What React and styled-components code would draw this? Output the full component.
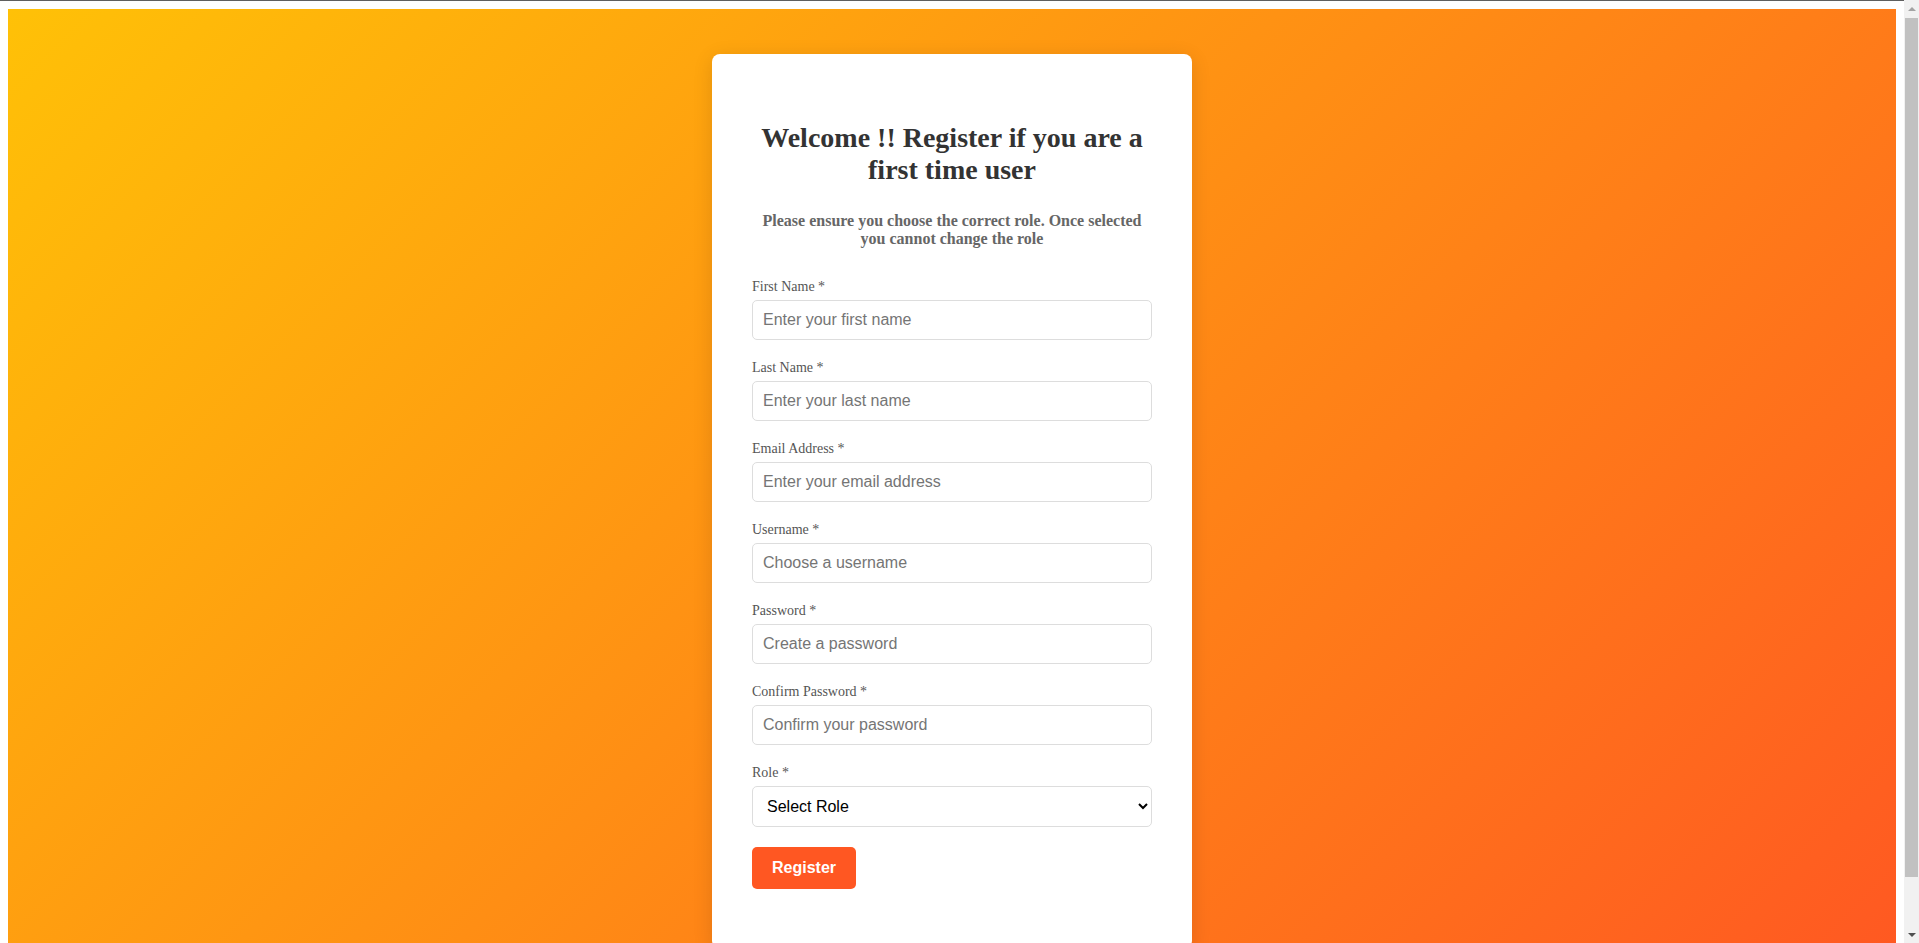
import React from "react";
import styled, { createGlobalStyle } from "styled-components";

const GlobalStyle = createGlobalStyle`
  html {
    border-top: 1px solid #5f5f5f;
    padding-right: 15px;
  }
  body {
    margin: 8px;
    font-family: "Liberation Serif", "Times New Roman", serif;
    background: #ffffff;
  }
`;

const Page = styled.div`
  display: flex;
  justify-content: center;
  align-items: flex-start;
  min-height: 100vh;
  box-sizing: border-box;
  padding: 45px 20px;
  background: linear-gradient(135deg, #ffc107, #ff5722);
`;

const Card = styled.div`
  width: 480px;
  box-sizing: border-box;
  padding: 40px 40px 60px;
  background: #ffffff;
  border-radius: 8px;
  box-shadow: 0 4px 20px rgba(0, 0, 0, 0.12);
`;

const Title = styled.h2`
  margin: 28px 0 0;
  font-size: 28px;
  font-weight: bold;
  color: #333333;
  text-align: center;
`;

const Subtitle = styled.h4`
  margin: 26px 0 31px;
  font-size: 16px;
  font-weight: bold;
  color: #666666;
  text-align: center;
`;

const Form = styled.form`
  display: flex;
  flex-direction: column;
`;

const Group = styled.div`
  margin-bottom: 20px;
`;

const Label = styled.label`
  display: block;
  margin-bottom: 5px;
  font-size: 14px;
  color: #555555;
`;

const Input = styled.input`
  display: block;
  width: 100%;
  box-sizing: border-box;
  padding: 10px;
  border: 1px solid #dddddd;
  border-radius: 5px;
  font-family: "Liberation Sans", Arial, sans-serif;
  font-size: 16px;
  color: #333333;
  background: #ffffff;
  outline: none;
  &::placeholder {
    color: #757575;
  }
`;

const Select = styled.select`
  display: block;
  width: 100%;
  box-sizing: border-box;
  padding: 10px;
  border: 1px solid #dddddd;
  border-radius: 5px;
  font-family: "Liberation Sans", Arial, sans-serif;
  font-size: 16px;
  color: #000000;
  background: #ffffff;
`;

const Button = styled.button`
  align-self: flex-start;
  padding: 12px 20px;
  border: none;
  border-radius: 5px;
  background: #ff5722;
  color: #ffffff;
  font-family: "Liberation Sans", Arial, sans-serif;
  font-size: 16px;
  font-weight: bold;
  cursor: pointer;
`;

/* Browser-style vertical scrollbar drawn over the right edge */
const Scrollbar = styled.div`
  position: fixed;
  top: 0;
  right: 0;
  width: 15px;
  height: 100vh;
  display: flex;
  flex-direction: column;
  background: #f1f1f1;
`;

const ArrowButton = styled.div`
  height: 17px;
  flex: none;
  display: flex;
  align-items: center;
  justify-content: center;
`;

const Arrow = styled.span`
  width: 0;
  height: 0;
  border-left: 4px solid transparent;
  border-right: 4px solid transparent;
  ${({ $dir, $color }) =>
    $dir === "up"
      ? `border-bottom: 4px solid ${$color};`
      : `border-top: 4px solid ${$color};`}
`;

const Track = styled.div`
  flex: 1;
  padding: 1px 1px 0;
`;

const Thumb = styled.div`
  height: calc(100% - 49px);
  background: #c1c1c1;
`;

const fields = [
  { id: "firstName", label: "First Name *", placeholder: "Enter your first name", type: "text" },
  { id: "lastName", label: "Last Name *", placeholder: "Enter your last name", type: "text" },
  { id: "email", label: "Email Address *", placeholder: "Enter your email address", type: "email" },
  { id: "username", label: "Username *", placeholder: "Choose a username", type: "text" },
  { id: "password", label: "Password *", placeholder: "Create a password", type: "password" },
  { id: "confirm", label: "Confirm Password *", placeholder: "Confirm your password", type: "password" },
];

export default function App() {
  return (
    <>
      <GlobalStyle />
      <Page>
        <Card>
          <Title>Welcome !! Register if you are a first time user</Title>
          <Subtitle>
            Please ensure you choose the correct role. Once selected you cannot change the role
          </Subtitle>
          <Form onSubmit={(e) => e.preventDefault()}>
            {fields.map((f) => (
              <Group key={f.id}>
                <Label htmlFor={f.id}>{f.label}</Label>
                <Input id={f.id} type={f.type} placeholder={f.placeholder} />
              </Group>
            ))}
            <Group>
              <Label htmlFor="role">Role *</Label>
              <Select id="role" defaultValue="">
                <option value="">Select Role</option>
                <option value="student">Student</option>
                <option value="teacher">Teacher</option>
              </Select>
            </Group>
            <Button type="submit">Register</Button>
          </Form>
        </Card>
      </Page>
      <Scrollbar aria-hidden="true">
        <ArrowButton>
          <Arrow $dir="up" $color="#a3a3a3" />
        </ArrowButton>
        <Track>
          <Thumb />
        </Track>
        <ArrowButton>
          <Arrow $dir="down" $color="#505050" />
        </ArrowButton>
      </Scrollbar>
    </>
  );
}
